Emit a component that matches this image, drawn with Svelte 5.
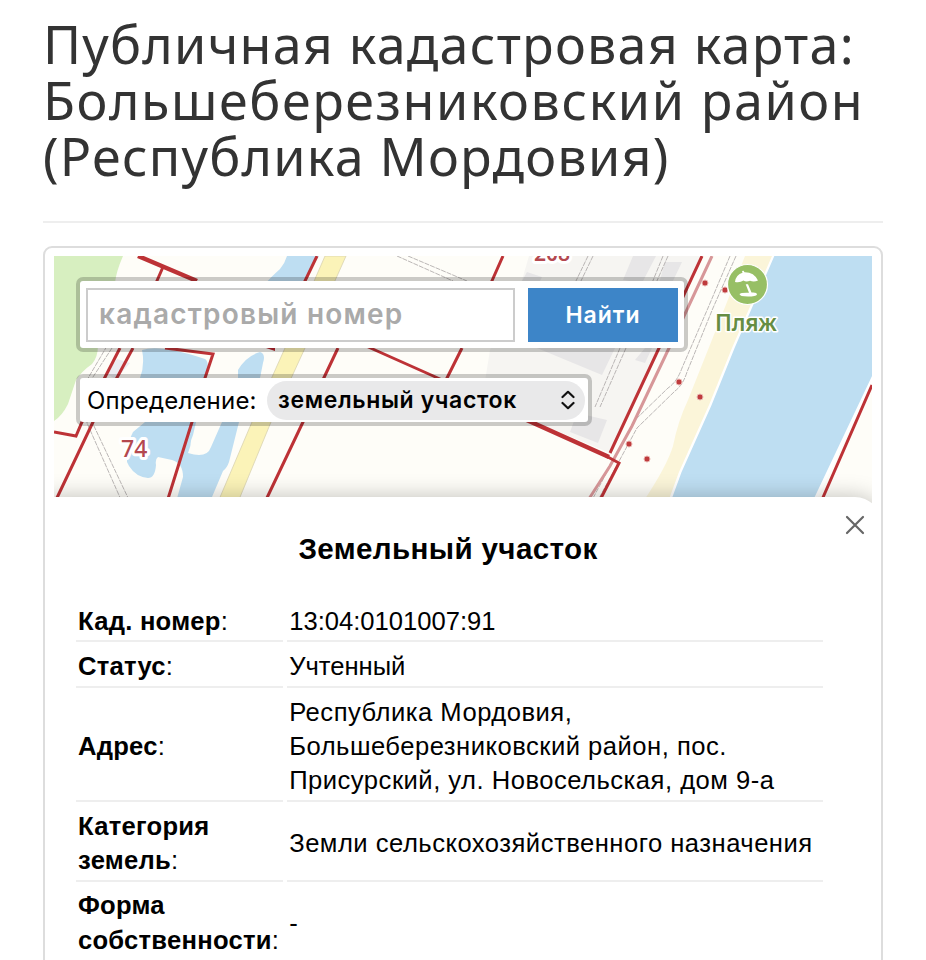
<script lang="ts">
  type Row = { label: string; lines: string[]; tight?: boolean };

  const title = [
    "Публичная кадастровая карта:",
    "Большеберезниковский район",
    "(Республика Мордовия)",
  ];

  const rows: Row[] = [
    { label: "Кад. номер", lines: ["13:04:0101007:91"], tight: true },
    { label: "Статус", lines: ["Учтенный"], tight: true },
    {
      label: "Адрес",
      lines: [
        "Республика Мордовия,",
        "Большеберезниковский район, пос.",
        "Присурский, ул. Новосельская, дом 9-а",
      ],
    },
    { label: "Категория земель", lines: ["Земли сельскохозяйственного назначения"] },
    { label: "Форма собственности", lines: ["-"] },
  ];

  // survey points along the shore
  const points = [
    [705, 283],
    [725, 290],
    [679, 382],
    [700, 397],
    [629, 444],
    [647, 459],
  ];

  let query = $state("");
  let open = $state(true);
</script>

<main class="page">
  <h1>
    {#each title as line, i}
      <span class="title-line" class:wide={i === 1}>{line}</span>
    {/each}
  </h1>

  <section class="card">
    <div class="map">
      <svg class="tiles" viewBox="54 256 818 252" width="818" height="252">
        <rect x="54" y="256" width="818" height="252" fill="#fefdf8" />
        <path class="forest" d="M54 256H123Q116 272 115 283L98 345Q98 357 92 364Q82 371 76 380L68 404Q62 416 54 421Z" />

        <path class="built" d="M529 256H702L610 453L482 400L490 350L522 280Z" />
        <path class="building" d="M527 272L542 277L539 283L522 281ZM633 256H656L642 283L623 280ZM665 262H682L672 283H659ZM520 341L616 346L602 375ZM645 348H652L645 363L635 360ZM577 413L607 420L598 443L570 432Z" />

        <g class="water">
          <path d="M287 256H319L302 283H266Q270 278 280 269Q285 263 287 256Z" />
          <path d="M142 350Q160 344 205 359Q210 362 206 378L195 432L188 453Q207 459 211 447L222 422L238 378V370Q246 356 260 352Q266 354 263 363L260 378L239 422L237 430L229 462Q227 468 223 471L212 497L210 502H176L183 477Q183 463 172 460L158 457Q155 459 156 465Q155 478 148 478Q136 477 129 466L127 462V445L133 432L145 422L140 378Q145 365 142 350Z" />
          <path class="river" d="M774 253H876V371L814 502H669L680 472L710 405L733 348Z" />
        </g>
        <path fill="#fefdf8" d="M206 380H234L220 422L210 447Q206 454 193 450Q188 446 193 435Z" />
        <path class="sand" d="M745 256H772L732 348L709 405L679 472L668 502H643Q667 466 673 446Q678 421 688 400L727 302Z" />
        <path class="highway" d="M325 256H346L305 348L271 422L238 502H218L252 422L285 348Z" />

        <path fill="#ececf1" d="M117 359L130 363L116 379L106 374Z" />
        <path class="track" d="M107 346L87 380L87 423L122 502M112 348L91 380L93 424L130 502M397 256L453 281M408 256L467 281M588 256L575 283M593 256L580 283M663 256L652 283M668 256L656 283M620 348L595 407M626 348L600 407M730 256L708 308L682 368Q677 382 668 388L634 421L591 502M736 256L713 308L687 372Q683 385 675 391L637 428L597 502" />
        <path fill="none" stroke="#d79799" stroke-width="3" d="M712 256L670 346L632 426L610 466L587 502" />

        <g class="bounds">
          <path class="thick" d="M138 256L197 281M520 417L609 457" />
          <path d="M163 267L156 283M120 348L82 422L76 436L54 432M133 348L93 422L55 502M165 348L213 354L205 378L192 422L167 502M317 256L304 283M338 348L303 422L265 502M503 256L491 283M462 348L446 380M366 346L440 379L527 420M702 256L610 453M606 456L619 463L599 502M872 385L821 502" />
        </g>
        <path fill="#b4242c" d="M266 348L275 345V351Z" />
        {#each points as [x, y]}
          <circle cx={x} cy={y} r="3" fill="#bf3b3d" stroke="#e9b6b2" stroke-width="1" />
        {/each}

        <text class="lot" x="121" y="457">74</text>
        <text class="lot small" x="534" y="261">208</text>
        <text class="beach" x="715" y="331">Пляж</text>

        <circle cx="747.500" cy="284.500" r="20" fill="#97bf65" stroke="#fff" stroke-width="1.200" />
        <g transform="translate(728 265)" fill="#fff">
          <path d="M7 17Q8 9.500 14.500 7.800L14 6L15.600 5.700L16.500 7.200Q26 7 30 15.500Q26 17.500 22 15.800Q18 17.500 15.500 15.500Q12 18 7 17Z" />
          <path d="M17.700 19.300H20L23.500 27.500Q29 27 29 29.500Q28 31.500 20 31.500Q11.500 31.500 11.500 29Q13 27.500 21 27.800Z" />
        </g>
      </svg>

      <form class="search" onsubmit={(e) => e.preventDefault()}>
        <input bind:value={query} placeholder="кадастровый номер" aria-label="кадастровый номер" />
        <button type="submit" class="find">Найти</button>
      </form>

      <div class="kind">
        <span class="kind-label">Определение:</span>
        <button type="button" class="kind-select">
          <span>земельный участок</span>
          <svg width="14" height="20" viewBox="0 0 14 20">
            <path d="M1.500 7L7 1.800L12.500 7M1.500 13L7 18.200L12.500 13" />
          </svg>
        </button>
      </div>
    </div>

    {#if open}
      <div class="sheet">
        <button type="button" class="close" aria-label="Закрыть" onclick={() => (open = false)}>
          <svg width="20" height="20" viewBox="0 0 20 20">
            <path d="M2 2L18 18M18 2L2 18" />
          </svg>
        </button>
        <h2>Земельный участок</h2>
        <table>
          <tbody>
            {#each rows as row (row.label)}
              <tr>
                <th><b>{row.label}</b>:</th>
                <td class:tight={row.tight}>
                  {#each row.lines as line}
                    <div>{line}</div>
                  {/each}
                </td>
              </tr>
            {/each}
          </tbody>
        </table>
      </div>
    {/if}
  </section>
</main>

<style>
  :global(body) {
    background: #fff;
    overflow: hidden;
  }

  .page {
    box-sizing: border-box;
    height: 960px;
    padding: 16px 43px 0;
    overflow: hidden;
    color: #000;
    font-family: "Liberation Sans", Arial, sans-serif;
  }

  h1 {
    margin: 0 0 23px;
    height: 205px;
    border-bottom: 2px solid #eee;
    color: #333;
    font: 400 52px/56px "Noto Sans", sans-serif;
    letter-spacing: 1.240px;
    white-space: nowrap;
  }

  .title-line {
    display: block;
  }

  .title-line.wide {
    letter-spacing: 1.580px;
  }

  .card {
    box-sizing: border-box;
    height: 800px;
    padding-top: 8px;
    border: 2px solid #ddd;
    border-radius: 9px;
  }

  .map {
    position: relative;
    box-sizing: border-box;
    height: 241px;
    margin: 0 9px;
    padding: 21px 22px 0;
    display: flex;
    flex-direction: column;
    align-items: flex-start;
    gap: 22px;
  }

  .tiles {
    position: absolute;
    top: 0;
    left: 0;
  }

  .forest {
    fill: #d7efc0;
  }

  .built {
    fill: #f6f5f2;
  }

  .building {
    fill: #e7e6e7;
  }

  .water {
    fill: #bedef2;
  }

  .river {
    stroke: #fff;
    stroke-width: 3;
  }

  .sand {
    fill: #fbf5d9;
  }

  .highway {
    fill: #fbf3b8;
    stroke: #d9d3b0;
    stroke-width: 0.8;
  }

  .track {
    fill: none;
    stroke: #a9a4a4;
    stroke-width: 0.8;
    stroke-dasharray: 5 1;
  }

  .bounds {
    fill: none;
    stroke: #bd3236;
    stroke-width: 3;
  }

  .bounds .thick {
    stroke-width: 4.5;
  }

  .lot,
  .beach {
    font: 500 23px "Noto Sans", sans-serif;
    fill: #b4484f;
    stroke: #fff;
    stroke-width: 6;
    stroke-linejoin: round;
    paint-order: stroke;
  }

  .lot.small {
    font-size: 21px;
    font-weight: 600;
  }

  .beach {
    fill: #668d42;
    stroke-width: 3;
    font-size: 22.500px;
    font-weight: 600;
    letter-spacing: -0.200px;
  }

  .search,
  .kind {
    position: relative;
    box-sizing: border-box;
    display: flex;
    border: 4px solid rgba(0, 0, 0, 0.2);
    border-radius: 7px;
    background: #fff;
    background-clip: padding-box;
  }

  .search {
    width: 612px;
    height: 75px;
    padding: 7px 6px 6px;
    gap: 13px;
  }

  input {
    box-sizing: border-box;
    width: 429px;
    height: 54px;
    padding: 0 11px 3px;
    border: 2px solid #ccc;
    border-radius: 0;
    outline: 0;
    font: 600 28px Inter, sans-serif;
    letter-spacing: 1.200px;
  }

  input::placeholder {
    color: #aaa;
    opacity: 1;
  }

  .find {
    width: 151px;
    height: 54px;
    padding: 0;
    border: 0;
    background: #3d85c8;
    color: #fff;
    font: 600 23px Inter, sans-serif;
    letter-spacing: 1px;
  }

  .kind {
    width: 516px;
    height: 52px;
    padding: 0 3px 0 7px;
    align-items: center;
    justify-content: space-between;
  }

  .kind-label {
    font: 400 24px Inter, sans-serif;
    letter-spacing: 0.200px;
    white-space: nowrap;
  }

  .kind-select {
    box-sizing: border-box;
    width: 318px;
    height: 39px;
    padding: 0 10px 0 11px;
    display: flex;
    align-items: center;
    justify-content: space-between;
    border: 0;
    border-radius: 20px;
    background: #e9e9ea;
    color: #000;
    font: 600 23px Inter, sans-serif;
    letter-spacing: 0.650px;
    white-space: nowrap;
  }

  .kind-select path,
  .close path {
    fill: none;
    stroke: #111;
    stroke-width: 2.2;
    stroke-linecap: round;
    stroke-linejoin: round;
  }

  .sheet {
    position: relative;
    padding: 33px 0 0 31px;
    border-radius: 0 26px 0 0;
    background: #fff;
    box-shadow: 0 0 22px rgba(0, 0, 0, 0.25);
    clip-path: inset(-26px 9px 0 9px);
  }

  .close {
    position: absolute;
    top: 18px;
    right: 16px;
    width: 20px;
    height: 20px;
    padding: 0;
    border: 0;
    background: none;
  }

  .close svg {
    display: block;
  }

  .close path {
    stroke: #666;
  }

  h2 {
    margin: 0 0 29px;
    width: 744px;
    font-size: 29.600px;
    line-height: 38px;
    letter-spacing: 0.360px;
    text-align: center;
  }

  table {
    width: 755px;
    margin-left: -4px;
    table-layout: fixed;
    border-spacing: 4px;
    font-size: 25.600px;
    line-height: 34.300px;
  }

  th,
  td {
    padding: 2.600px;
    border-bottom: 2px solid #eee;
    text-align: left;
    vertical-align: middle;
  }

  th {
    width: 202px;
    padding-left: 2px;
    font-weight: 400;
    letter-spacing: 0.250px;
  }

  td {
    letter-spacing: 0.490px;
    white-space: nowrap;
  }

  td.tight {
    letter-spacing: 0;
  }
</style>
